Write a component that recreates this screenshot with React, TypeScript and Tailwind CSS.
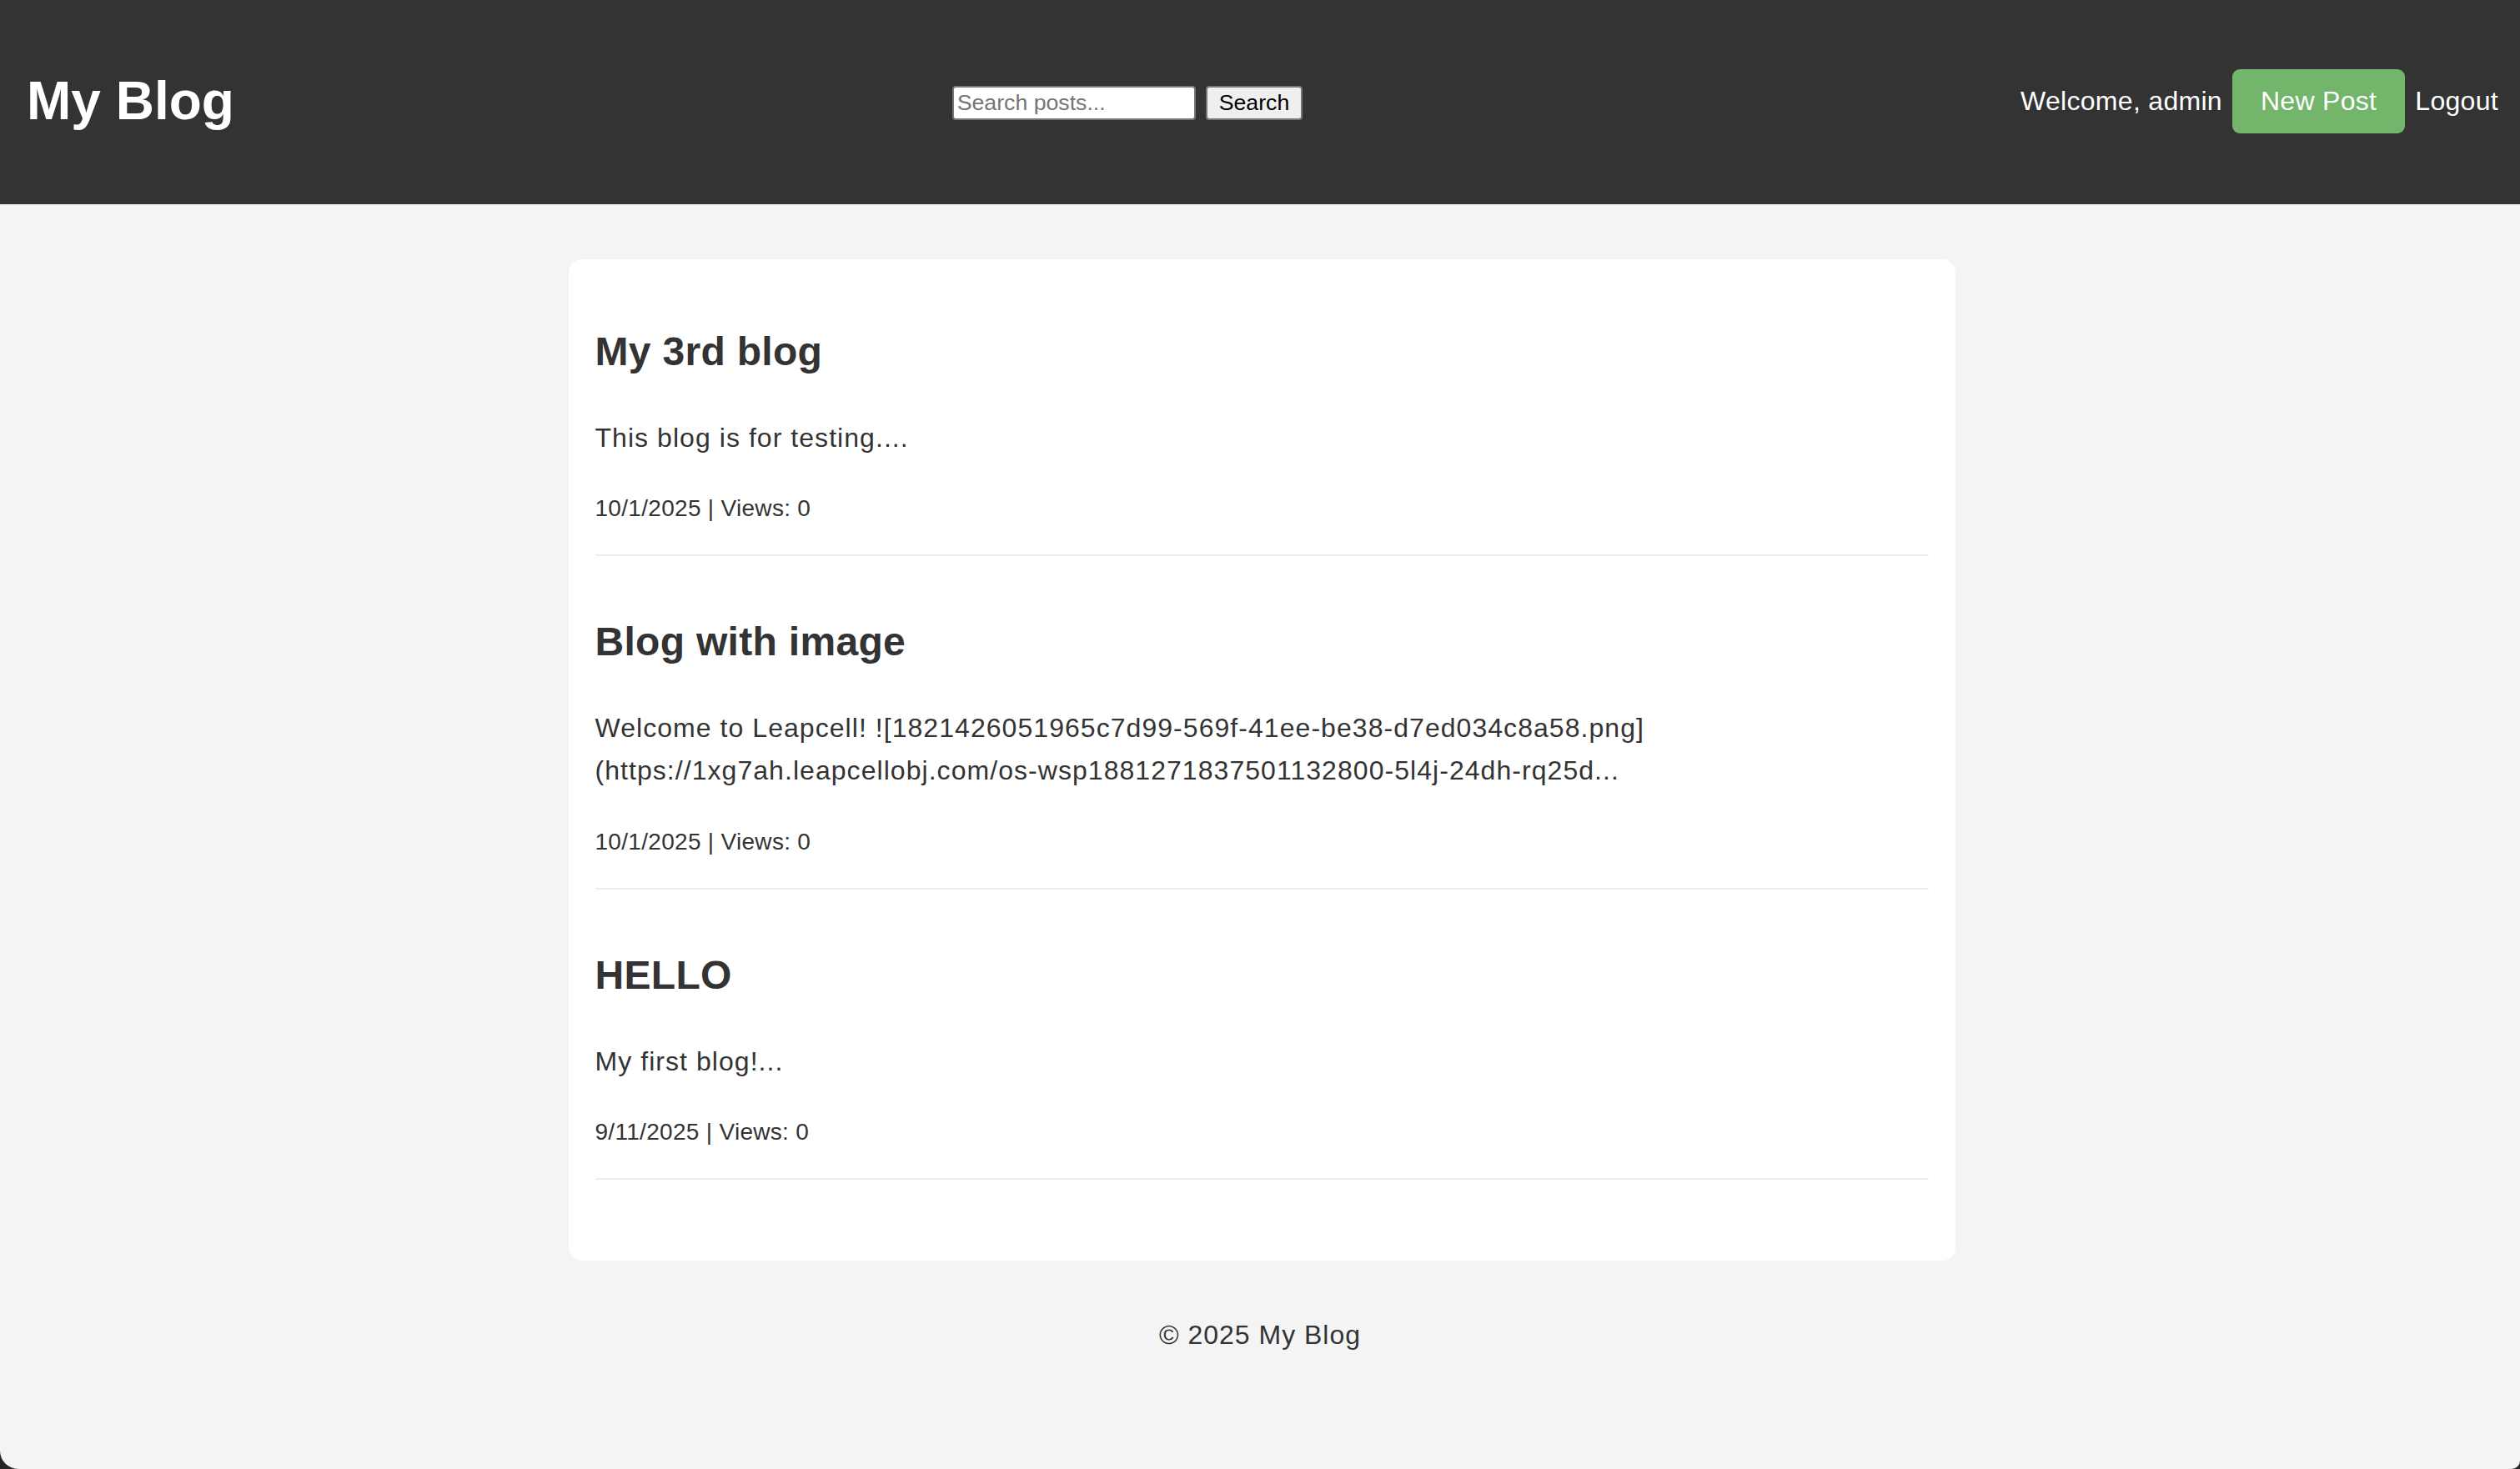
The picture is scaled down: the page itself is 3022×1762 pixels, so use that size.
import React from "react";

const posts = [
  {
    title: "My 3rd blog",
    lines: ["This blog is for testing...."],
    meta: "10/1/2025 | Views: 0",
  },
  {
    title: "Blog with image",
    lines: [
      "Welcome to Leapcell! ![1821426051965c7d99-569f-41ee-be38-d7ed034c8a58.png]",
      "(https://1xg7ah.leapcellobj.com/os-wsp1881271837501132800-5l4j-24dh-rq25d...",
    ],
    meta: "10/1/2025 | Views: 0",
  },
  {
    title: "HELLO",
    lines: ["My first blog!..."],
    meta: "9/11/2025 | Views: 0",
  },
];

export default function App() {
  return (
    <div
      className="w-full h-[1762px] bg-[#262626] overflow-hidden"
      style={{ fontFamily: '"Liberation Sans", Arial, sans-serif' }}
    >
      <div className="h-full bg-[#f4f4f4] rounded-bl-[22px] rounded-br-[10px] overflow-hidden text-[#333]">
        <header className="h-[245px] bg-[#333333] flex items-center justify-between pl-8 pr-[26px] pb-[3px]">
          <h1 className="text-[64px] font-bold text-white leading-none">My Blog</h1>
          <form className="flex items-center gap-3 pt-[5px]" onSubmit={(e) => e.preventDefault()}>
            <input
              type="text"
              placeholder="Search posts..."
              className="w-[292px] h-[41px] bg-white border-2 border-[#767676] rounded-[4px] px-[4px] text-[26.7px] text-black placeholder:text-[#757575] outline-none"
            />
            <button
              type="submit"
              className="h-[41px] px-[14px] bg-[#efefef] border-2 border-[#767676] rounded-[4px] text-[26.7px] text-black leading-none"
            >
              Search
            </button>
          </form>
          <nav className="flex items-center gap-[12px] text-[32px] text-white tracking-[0.3px]">
            <span>Welcome, admin</span>
            <a className="h-[77px] px-[34px] flex items-center bg-[#73b66b] rounded-[9px] text-white">
              New Post
            </a>
            <a className="text-white">Logout</a>
          </nav>
        </header>

        <div className="flex justify-center pl-[4px] mt-[66px]">
          <main className="w-[1663px] bg-white rounded-[16px] pt-[72px] pb-[33px] px-8">
            {posts.map((p) => (
              <article key={p.title} className="mb-16 pb-[33px] border-b-2 border-[#eeeeee]">
                <h2 className="text-[48px] font-bold leading-[77px] tracking-[0.3px] text-[#333]">{p.title}</h2>
                <div className="mt-10 text-[32px] leading-[51.2px] tracking-[1.05px] text-[#333]">
                  {p.lines.map((l) => (
                    <div key={l}>{l}</div>
                  ))}
                </div>
                <div className="mt-9 text-[28px] leading-[45px] tracking-[0.3px] text-[#333]">{p.meta}</div>
              </article>
            ))}
          </main>
        </div>

        <footer className="mt-8 pt-8 text-center text-[32px] leading-[51px] tracking-[1px] text-[#333]">
          © 2025 My Blog
        </footer>
      </div>
    </div>
  );
}
